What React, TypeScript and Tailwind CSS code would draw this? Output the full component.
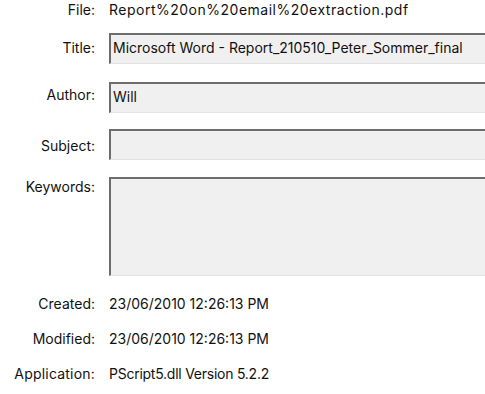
const font = { fontFamily: 'Inter, "Noto Sans", "Liberation Sans", sans-serif' };

function Label({ children, className = "" }: { children: React.ReactNode; className?: string }) {
  return <div className={"w-[95px] shrink-0 text-right leading-5 " + className}>{children}</div>;
}

function Box({ value, height }: { value?: string; height: string }) {
  return (
    <div
      className={
        "flex-1 min-w-0 bg-[#f0f0f0] border-t-2 border-l-2 border-[#6d6d6d] border-b border-b-[#e3e3e3] pl-[2px] pt-[3px] leading-5 whitespace-nowrap overflow-hidden " +
        height
      }
    >
      {value}
    </div>
  );
}

export default function App() {
  return (
    <div className="w-[485px] h-[394px] bg-white text-[14px] text-[#111] overflow-hidden" style={font}>
      <div className="flex flex-col pr-0">
        {/* File */}
        <div className="flex h-5 items-center gap-[14px]">
          <Label>File:</Label>
          <div className="leading-5 whitespace-nowrap tracking-[0.5px]">Report%20on%20email%20extraction.pdf</div>
        </div>

        {/* Title */}
        <div className="flex gap-[14px] mt-[13px]">
          <Label className="pt-[5px]">Title:</Label>
          <Box value="Microsoft Word - Report_210510_Peter_Sommer_final" height="h-[31px]" />
        </div>

        {/* Author */}
        <div className="flex gap-[14px] mt-[18px]">
          <Label className="pt-[3px]">Author:</Label>
          <Box value="Will" height="h-[31px]" />
        </div>

        {/* Subject */}
        <div className="flex gap-[14px] mt-[16px]">
          <Label className="pt-[7px]">Subject:</Label>
          <Box height="h-[31px]" />
        </div>

        {/* Keywords */}
        <div className="flex gap-[14px] mt-[17px]">
          <Label>Keywords:</Label>
          <Box height="h-[99px]" />
        </div>

        {/* Dates */}
        <div className="flex gap-[14px] mt-[18px]">
          <Label>Created:</Label>
          <div className="leading-5">23/06/2010 12:26:13 PM</div>
        </div>
        <div className="flex gap-[14px] mt-[15px]">
          <Label>Modified:</Label>
          <div className="leading-5">23/06/2010 12:26:13 PM</div>
        </div>
        <div className="flex gap-[14px] mt-[15px]">
          <Label className="tracking-[0.2px]">Application:</Label>
          <div className="leading-5 tracking-[-0.25px]">PScript5.dll Version 5.2.2</div>
        </div>
      </div>
    </div>
  );
}
